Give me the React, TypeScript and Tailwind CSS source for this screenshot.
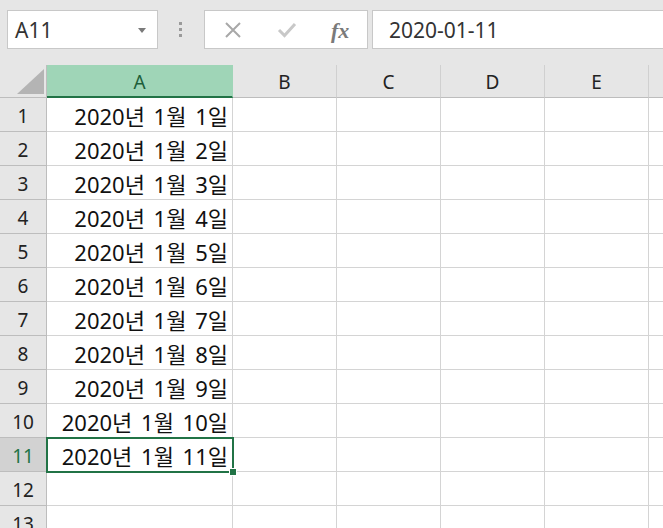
import React from "react";

const COLS = [
  { key: "A", w: "w-[186px]" },
  { key: "B", w: "w-[104px]" },
  { key: "C", w: "w-[104px]" },
  { key: "D", w: "w-[104px]" },
  { key: "E", w: "w-[104px]" },
  { key: "F", w: "w-[40px]" },
];

const ROWS = Array.from({ length: 13 }, (_, i) => i + 1);

function cellText(row: number, col: string) {
  if (col !== "A" || row > 11) return "";
  return `2020년 1월 ${row}일`;
}

export default function App() {
  return (
    <div className="w-[663px] h-[528px] overflow-hidden bg-white font-['Noto_Sans','Noto_Sans_CJK_KR',sans-serif] text-[#111] relative">
      {/* Formula bar */}
      <div className="h-[65px] bg-[#e6e6e6] flex items-start pt-[10px]">
        <div className="ml-[7px] w-[151px] h-[39px] bg-white border border-[#c8c8c8] flex items-center justify-between pl-[7px] pr-[11px] pt-[2px]">
          <span className="text-[21px] text-[#333] leading-none">A11</span>
          <svg width="8" height="5" viewBox="0 0 8 5">
            <path d="M0 0h8L4 5z" fill="#7a7a7a" />
          </svg>
        </div>
        <div className="ml-[21px] w-[3px] h-[39px] flex flex-col items-center justify-center gap-[3px]">
          <div className="w-[3px] h-[3px] bg-[#9a9a9a]" />
          <div className="w-[3px] h-[3px] bg-[#9a9a9a]" />
          <div className="w-[3px] h-[3px] bg-[#9a9a9a]" />
        </div>
        <div className="ml-[22px] w-[164px] h-[39px] bg-white border border-[#c8c8c8] flex items-center">
          <div className="w-[54px] flex justify-center ml-[1px]">
            <svg width="18" height="18" viewBox="0 0 18 18">
              <path d="M2 2L16 16M16 2L2 16" stroke="#a8a8a8" strokeWidth="2" />
            </svg>
          </div>
          <div className="w-[54px] flex justify-center">
            <svg width="20" height="16" viewBox="0 0 20 16">
              <path d="M2 8L7.5 13.5L18 2" stroke="#c8c8c8" strokeWidth="3" fill="none" />
            </svg>
          </div>
          <div className="w-[54px] flex justify-center pt-[2px]">
            <span className="font-['Liberation_Serif',serif] italic font-semibold text-[22px] text-[#7a7a7a] leading-none">
              fx
            </span>
          </div>
        </div>
        <div className="ml-[4px] flex-1 h-[39px] bg-white border border-[#c8c8c8] border-r-0 flex items-center pl-[16px] pt-[2px]">
          <span className="text-[21px] text-[#333] leading-none">2020-01-11</span>
        </div>
      </div>

      {/* Column headers */}
      <div className="flex h-[33px] bg-[#e6e6e6]">
        <div className="w-[47px] shrink-0 border-r border-b border-[#bdbdbd] flex items-end justify-end pr-[2px] pb-[3px]">
          <svg width="27" height="25" viewBox="0 0 27 25">
            <path d="M27 0V25H0z" fill="#b4b4b4" />
          </svg>
        </div>
        {COLS.map((c) => (
          <div
            key={c.key}
            className={`${c.w} shrink-0 flex items-center justify-center text-[19px] pt-[3px] ${
              c.key === "A"
                ? "bg-[#9fd5b7] text-[#1d5e3a] border-b-2 border-[#217346] border-r border-r-[#9fd5b7]"
                : "border-r border-r-[#d0d0d0] border-b border-b-[#bdbdbd] text-[#222]"
            }`}
          >
            {c.key === "F" ? "" : c.key}
          </div>
        ))}
      </div>

      {/* Rows */}
      {ROWS.map((r) => (
        <div key={r} className="flex h-[34px]">
          <div
            className={`w-[47px] shrink-0 border-r border-b border-[#bdbdbd] flex items-center justify-center text-[19px] pt-[3px] ${
              r === 11 ? "bg-[#d2d2d2] text-[#217346]" : "bg-[#e6e6e6] text-[#222]"
            }`}
          >
            {r}
          </div>
          {COLS.map((c) => (
            <div
              key={c.key}
              className={`${c.w} shrink-0 border-r border-b border-[#d4d4d4] flex items-center justify-end pr-[4px] pt-[3px] text-[22px] [word-spacing:3px] whitespace-nowrap`}
            >
              {cellText(r, c.key)}
            </div>
          ))}
        </div>
      ))}

      {/* Selection */}
      <div className="absolute left-[46px] top-[437px] w-[188px] h-[36px] border-2 border-[#217346] pointer-events-none">
        <div className="absolute right-[-5px] bottom-[-5px] w-[8px] h-[8px] bg-[#217346] border border-white" />
      </div>
    </div>
  );
}
